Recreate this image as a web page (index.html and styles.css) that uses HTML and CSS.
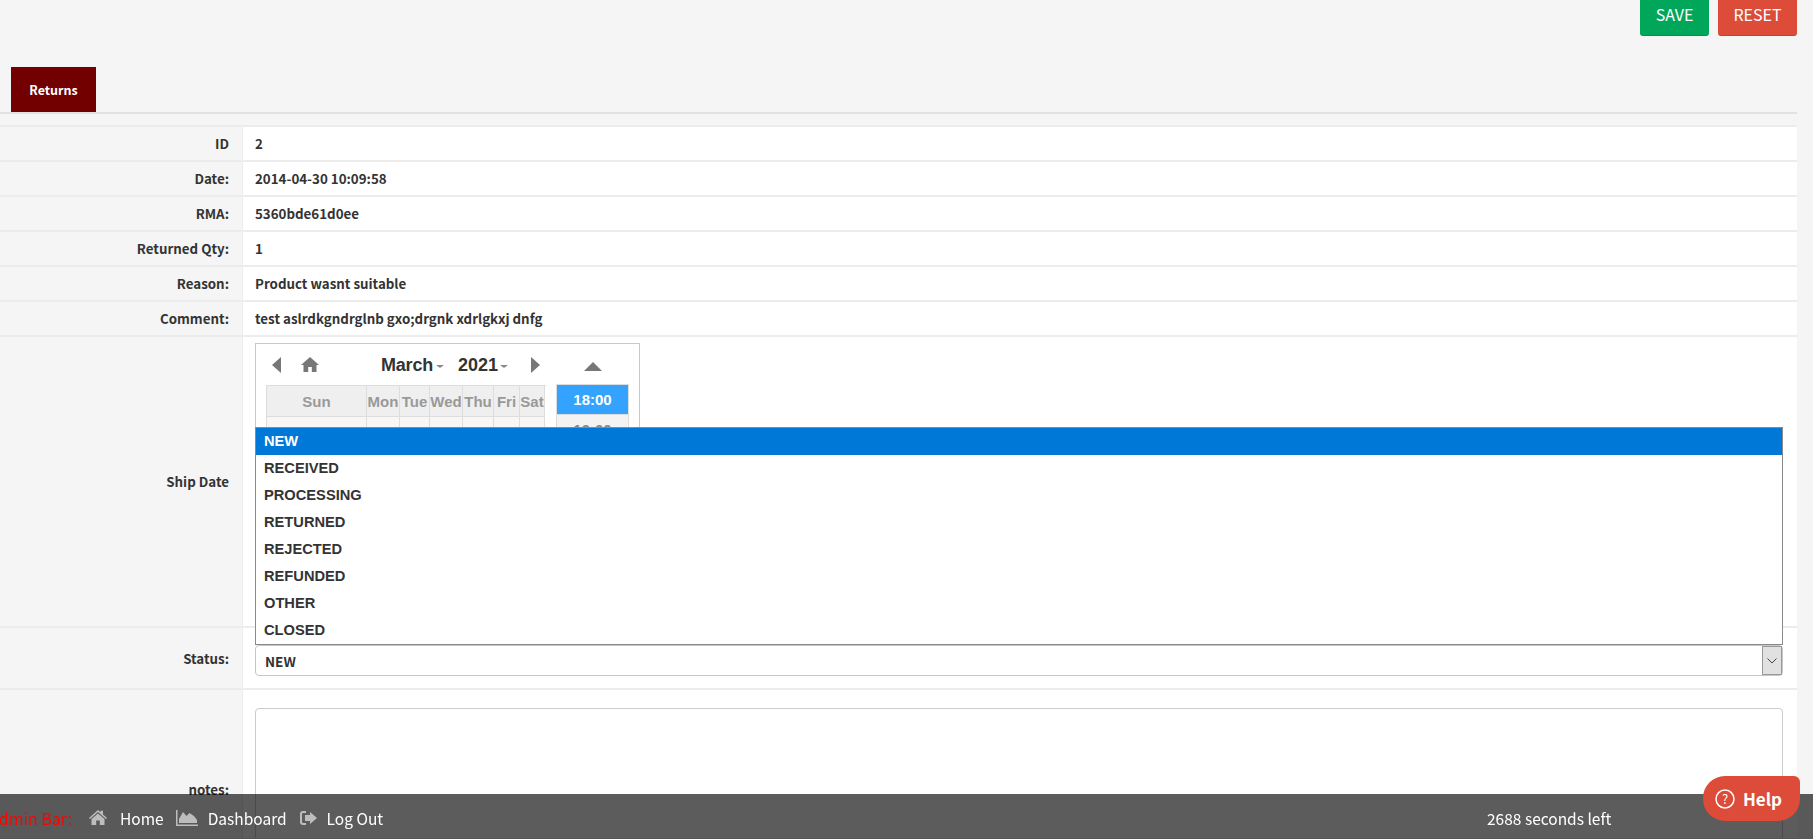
FILE: index.html
```html
<!DOCTYPE html>
<html lang="en">
<head>
<meta charset="utf-8">
<title>Returns</title>
<link rel="stylesheet" href="styles.css">
</head>
<body>
<div class="toolbar">
  <button class="btn btn-save">SAVE</button>
  <button class="btn btn-reset">RESET</button>
</div>
<div class="tabs"><div class="tab">Returns</div></div>
<div class="form">
  <div class="row"><div class="label">ID</div><div class="value">2</div></div>
  <div class="row"><div class="label">Date:</div><div class="value">2014-04-30 10:09:58</div></div>
  <div class="row"><div class="label">RMA:</div><div class="value">5360bde61d0ee</div></div>
  <div class="row"><div class="label">Returned Qty:</div><div class="value">1</div></div>
  <div class="row"><div class="label">Reason:</div><div class="value">Product wasnt suitable</div></div>
  <div class="row"><div class="label">Comment:</div><div class="value">test aslrdkgndrglnb gxo;drgnk xdrlgkxj dnfg</div></div>
  <div class="row row-ship">
    <div class="label label-ship">Ship Date</div>
    <div class="value value-ship">
      <div class="calendar">
        <div class="cal-main">
          <div class="cal-head">
            <svg class="ico-left" viewBox="0 0 9 16"><path d="M9 0V16L0 8Z"/></svg>
            <svg class="ico-home" viewBox="0 0 18 15"><path d="M9 0 18 8H15.500V15H10.800V10H7.200V15H2.500V8H0Z"/></svg>
            <span class="cal-month">March</span><span class="caret"></span>
            <span class="cal-year">2021</span><span class="caret"></span>
            <svg class="ico-right" viewBox="0 0 9 16"><path d="M0 0V16L9 8Z"/></svg>
          </div>
          <div class="cal-grid">
            <div class="dow">Sun</div><div class="dow">Mon</div><div class="dow">Tue</div><div class="dow">Wed</div><div class="dow">Thu</div><div class="dow">Fri</div><div class="dow">Sat</div>
            <div class="day"></div><div class="day"></div><div class="day"></div><div class="day"></div><div class="day"></div><div class="day"></div><div class="day"></div>
          </div>
        </div>
        <div class="cal-time">
          <svg class="ico-up" viewBox="0 0 18 9"><path d="M9 0 18 9H0Z"/></svg>
          <div class="time time-on">18:00</div>
          <div class="time">19:00</div>
        </div>
      </div>
    </div>
  </div>
  <div class="row row-status">
    <div class="label label-status">Status:</div>
    <div class="value value-status">
      <div class="select"><span>NEW</span><span class="select-btn"><svg viewBox="0 0 10 6"><path d="M.5.500 5 5 9.500.500"/></svg></span></div>
      <ul class="dropdown">
        <li class="on">NEW</li><li>RECEIVED</li><li>PROCESSING</li><li>RETURNED</li><li>REJECTED</li><li>REFUNDED</li><li>OTHER</li><li>CLOSED</li>
      </ul>
    </div>
  </div>
  <div class="row row-notes">
    <div class="label label-notes">notes:</div>
    <div class="value value-notes"><div class="textarea"></div></div>
  </div>
</div>
<div class="adminbar">
  <span class="bar-title">Admin Bar:</span>
  <span class="bar-link"><svg class="bar-ico ico-h" viewBox="0 0 18 15"><path d="M9 0 11.500 2.200V.800H14V4.400L18 8 17 9 9 2 1 9 0 8ZM9 3.500 15.500 9V15H10.800V10.500H7.200V15H2.500V9Z"/></svg>Home</span>
  <span class="bar-link"><svg class="bar-ico ico-d" viewBox="0 0 22 16"><path d="M0 0H1.500V14.500H22V16H0ZM3 13V9L7 2 10.500 6 13.500 3 18 6 21 10V13Z"/></svg>Dashboard</span>
  <span class="bar-link"><svg class="bar-ico ico-l" viewBox="0 0 17 14"><path d="M6 0V2H3Q2 2 2 3V11Q2 12 3 12H6V14H3Q0 14 0 11V3Q0 0 3 0ZM10 1 17 7 10 13V10H5V4H10Z"/></svg>Log Out</span>
  <span class="bar-time">2688 seconds left</span>
</div>
<div class="help">
  <svg class="help-ico" viewBox="0 0 20 20"><circle cx="10" cy="10" r="9" fill="none" stroke="#fff" stroke-width="1.500"/><text x="10" y="14.500" text-anchor="middle" class="help-q">?</text></svg>
  Help
</div>
</body>
</html>
```
FILE: styles.css
```css
html, body { margin: 0; height: 839px; overflow: hidden; }
body {
  background: #f5f5f5;
  color: #333;
  font-family: "Noto Sans CJK SC", "Noto Sans", sans-serif;
  font-size: 13.330px;
  line-height: 20px;
}
.toolbar { display: flex; justify-content: flex-end; gap: 9px; height: 36px; padding-right: 16px; }
.btn {
  border: 0; border-bottom: 1px solid rgba(0,0,0,.12); border-radius: 0 0 3px 3px;
  color: #fff; font: inherit; font-size: 16px; height: 36px; padding: 0 0 8px;
}
.btn-save { background: #00a65a; width: 69px; }
.btn-reset { background: #dd4b39; width: 79px; }
.tabs { margin-top: 31px; height: 45px; padding-left: 11px; border-bottom: 2px solid #e2e2e2; width: 1786px; box-sizing: content-box; }
.tab {
  width: 85px; height: 45px; background: #720000; color: #fff;
  font-size: 12.500px; font-weight: 700; display: flex; align-items: center; justify-content: center;
}
.form { margin-top: 11px; width: 1797px; border-top: 2px solid #ececec; }
.row { display: flex; height: 33px; border-bottom: 2px solid #ececec; font-weight: 700; }
.label { width: 229px; padding: 0 13px 0 0; text-align: right; display: flex; align-items: center; justify-content: flex-end; flex: none; box-sizing: content-box; }
.value { flex: 1; background: #fff; border-left: 1px solid #ececec; padding: 0 0 0 12px; display: flex; align-items: center; }
.row-ship { height: 289px; }
.value-ship { align-items: flex-start; padding-top: 6px; }
.calendar {
  width: 363px; height: 200px; background: #fff; border: 1px solid #c9c9c9;
  display: flex; padding: 0 10px; font-family: "Liberation Sans", sans-serif;
}
.cal-main { width: 280px; }
.cal-head { height: 41px; display: flex; align-items: center; }
.ico-left { width: 9px; height: 16px; margin-left: 6px; fill: #777; }
.ico-home { width: 18px; height: 15px; margin-left: 20px; fill: #777; }
.cal-month { margin-left: 62px; font-size: 18px; font-weight: 700; width: 52px; color: #333; letter-spacing: -.2px; }
.cal-year { margin-left: 14px; font-size: 18px; font-weight: 700; width: 39px; color: #333; }
.caret { width: 0; height: 0; margin: 3px 0 0 3px; border: 4px solid transparent; border-top: 3px solid #888; border-bottom: 0; }
.ico-right { width: 9px; height: 16px; margin-left: 23px; fill: #777; }
.cal-grid { display: grid; grid-template-columns: 100px 33px 30px 33px 31px 26px 25px; grid-auto-rows: 31px; border-top: 1px solid #ddd; border-left: 1px solid #ddd; width: 279px; }
.dow { background: #efefef; color: #999; font-size: 15px; text-align: center; line-height: 31px; border-right: 1px solid #ddd; border-bottom: 1px solid #ddd; box-sizing: border-box; white-space: nowrap; }
.day { background: #f7f7f7; border-right: 1px solid #ddd; box-sizing: border-box; }
.cal-time { width: 73px; margin-left: 10px; text-align: center; }
.ico-up { display: block; width: 18px; height: 9px; margin: 18px auto 13px; fill: #777; }
.time { height: 31px; line-height: 30px; font-size: 15px; font-weight: 700; color: #888; background: #f3f3f3; border: 1px solid #ddd; border-top: 0; box-sizing: border-box; }
.time-on { background: #33a3ff; color: #fff; border: 1px solid #ddd; }
.row-status { height: 60px; }
.label-status { align-items: flex-start; padding-top: 21px; height: 39px; }
.value-status { position: relative; align-items: flex-start; padding-top: 17px; }
.select {
  width: 1528px; height: 31px; box-sizing: border-box; background: #fff; border: 1px solid #c6c6c6; border-radius: 4px;
  display: flex; justify-content: space-between; align-items: center; padding-left: 9px; font-size: 13.500px; position: relative;
}
.select-btn {
  width: 20px; height: 29px; background: #e1e1e1; border: 1px solid #9a9a9a; box-sizing: border-box; display: flex; align-items: center; justify-content: center;
}
.select-btn svg { width: 10px; height: 6px; fill: none; stroke: #444; stroke-width: 1; }
.dropdown {
  position: absolute; left: 12px; bottom: 43px; width: 1528px; height: 218px; margin: 0; padding: 0; list-style: none; box-sizing: border-box;
  background: #fff; border: 1px solid #8a8a8a; font-family: "Liberation Sans", sans-serif; font-size: 14.670px; font-weight: 700;
}
.dropdown li { height: 27px; line-height: 27px; padding-left: 8px; }
.dropdown .on { background: #0078d7; color: #fff; }
.row-notes { height: 148px; overflow: hidden; }
.label-notes { align-items: flex-start; padding-top: 90px; height: 58px; }
.value-notes { align-items: flex-start; padding-top: 18px; }
.textarea { width: 1528px; height: 250px; box-sizing: border-box; border: 1px solid #ccc; border-radius: 4px; flex: none; }
.adminbar {
  position: fixed; left: 0; right: 0; bottom: 0; height: 45px; box-sizing: border-box; padding-top: 2px; background: rgba(0,0,0,.64); color: #fff;
  display: flex; align-items: center; font-size: 15.500px; font-weight: 400;
}
.bar-title { color: #f00; font-size: 16px; margin-left: -11px; width: 100px; white-space: nowrap; }
.bar-link { display: flex; align-items: center; }
.bar-ico { fill: #bdbdbd; flex: none; }
.ico-h { width: 18px; height: 15px; margin-right: 13px; }
.ico-d { width: 22px; height: 16px; margin: 0 10px 0 12px; }
.ico-l { width: 17px; height: 14px; margin: 0 10px 0 13px; }
.bar-time { position: absolute; left: 1487px; }
.help {
  position: fixed; left: 1703px; top: 776px; width: 97px; height: 45px; box-sizing: border-box; background: #dd4b39; color: #fff;
  border-radius: 22px 6px 22px 22px; display: flex; align-items: center; padding-left: 12px; gap: 8px; font-size: 17px; font-weight: 700;
}
.help-ico { width: 20px; height: 20px; }
.help-q { font-size: 13px; fill: #fff; font-weight: 400; }
```
